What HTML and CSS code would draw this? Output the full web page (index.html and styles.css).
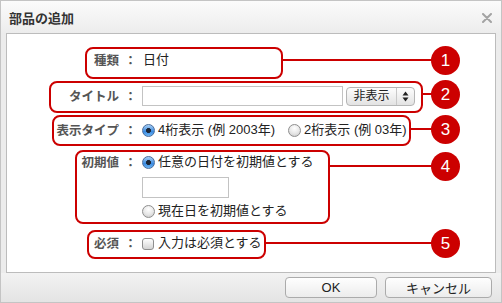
FILE: index.html
```html
<!DOCTYPE html>
<html lang="ja">
<head>
<meta charset="utf-8">
<link rel="stylesheet" href="styles.css">
</head>
<body>
<div class="page">
  <div class="dialog">
    <div class="titlebar">
      <span class="title">部品の追加</span>
      <svg class="close" width="10" height="10" viewBox="0 0 10 10"><path d="M1 1L9 9M9 1L1 9" stroke="#a3a3a3" stroke-width="2" stroke-linecap="round"/></svg>
    </div>
    <div class="panel">
      <div class="row r1">
        <span class="lbl">種類</span><span class="colon">：</span>
        <span class="val">日付</span>
      </div>
      <div class="row r2">
        <span class="lbl">タイトル</span><span class="colon">：</span>
        <span class="text-input wide"></span>
        <span class="select"><span class="sel-text">非表示</span><span class="sel-arrows"><svg width="7" height="11" viewBox="0 0 7 11"><path d="M3.5 0.5L6.5 4.5H0.5Z M3.5 10.5L6.5 6.5H0.5Z" fill="#222"/></svg></span></span>
      </div>
      <div class="row r3">
        <span class="lbl">表示タイプ</span><span class="colon">：</span>
        <span class="radio on"></span><span class="val opt">4桁表示 (例 2003年)</span>
        <span class="radio second"></span><span class="val opt">2桁表示 (例 03年)</span>
      </div>
      <div class="row r4">
        <span class="lbl">初期値</span><span class="colon">：</span>
        <div class="stack">
          <div class="line"><span class="radio on"></span><span class="val opt">任意の日付を初期値とする</span></div>
          <span class="text-input short"></span>
          <div class="line last"><span class="radio"></span><span class="val opt">現在日を初期値とする</span></div>
        </div>
      </div>
      <div class="row r5">
        <span class="lbl">必須</span><span class="colon">：</span>
        <span class="check"></span><span class="val opt">入力は必須とする</span>
      </div>
    </div>
    <div class="footer">
      <span class="btn ok">OK</span>
      <span class="btn cancel">キャンセル</span>
    </div>
  </div>

  <div class="annot">
    <div class="box b1"></div>
    <div class="box b2"></div>
    <div class="box b3"></div>
    <div class="box b4"></div>
    <div class="box b5"></div>
    <div class="lead k1"></div>
    <div class="lead k2"></div>
    <div class="lead k3"></div>
    <div class="lead k4"></div>
    <div class="lead k5"></div>
    <div class="num n1">1</div>
    <div class="num n2">2</div>
    <div class="num n3">3</div>
    <div class="num n4">4</div>
    <div class="num n5">5</div>
  </div>
</div>
</body>
</html>
```
FILE: styles.css
```css
* { box-sizing: border-box; }
html, body { margin: 0; padding: 0; background: #fff; }
body {
  font-family: "Liberation Sans", "Noto Sans CJK JP", sans-serif;
  color: #222;
}
.page { position: relative; width: 502px; height: 303px; overflow: hidden; }

.dialog {
  width: 502px;
  height: 303px;
  border: 1px solid #c4c4c4;
  background: linear-gradient(#fbfbfb 0px, #ececec 33px, #ececec 270px, #e6e6e6 100%);
  display: flex;
  flex-direction: column;
}

.titlebar {
  height: 32px;
  flex: none;
  display: flex;
  align-items: center;
  justify-content: space-between;
  padding: 0 9px 0 8px;
}
.title {
  font-size: 13px;
  font-weight: bold;
  color: #333;
  font-family: "Noto Sans CJK JP", sans-serif;
  margin-top: 1px;
}
.close { margin-top: 1px; }

.panel {
  margin: 0 5px;
  height: 240px;
  flex: none;
  border: 1px solid #bcbcbc;
  background: #fff;
  padding-top: 16px;
  display: flex;
  flex-direction: column;
  overflow: hidden;
}

.row { display: flex; align-items: center; }
.lbl {
  width: 112px;
  flex: none;
  text-align: right;
  font-size: 12.5px;
  font-weight: bold;
  color: #555;
  line-height: 20px;
  font-family: "Noto Sans CJK JP", sans-serif;
}
.colon {
  width: 23px;
  flex: none;
  text-align: center;
  font-size: 12.5px;
  font-weight: bold;
  color: #555;
  line-height: 20px;
  font-family: "Noto Sans CJK JP", sans-serif;
}
.val { font-size: 13px; line-height: 20px; color: #222; white-space: nowrap; }
.r1 .val { margin-left: 1px; }

.r2 { margin-top: 16px; }
.r3 { margin-top: 14px; }
.r4 { margin-top: 12px; align-items: flex-start; }
.r5 { margin-top: 12px; }

.text-input {
  display: block;
  border: 1px solid #c3c3c3;
  background: #fff;
  flex: none;
}
.text-input.wide { width: 201px; height: 20px; }
.text-input.short { width: 87px; height: 21px; margin-top: 5px; }

.select {
  margin-left: 3px;
  width: 69px;
  height: 19px;
  border: 1px solid #b5b5b5;
  border-radius: 4px;
  background: linear-gradient(#fdfdfd, #e3e3e3);
  display: flex;
  align-items: center;
  font-size: 12px;
}
.sel-text {
  width: 50px;
  text-align: center;
  border-right: 1px solid #c8c8c8;
  line-height: 17px;
  color: #222;
}
.sel-arrows { flex: 1; display: flex; justify-content: center; align-items: center; }

.radio {
  width: 13px;
  height: 13px;
  border-radius: 50%;
  border: 1px solid #8e8e8e;
  background: radial-gradient(circle at 50% 30%, #ffffff 0%, #e6e6e6 55%, #c4c4c4 100%);
  margin-right: 3px;
  flex: none;
}
.radio.on {
  border-color: #4a6d9c;
  background: radial-gradient(circle at 50% 50%, #1b2636 0 2.2px, transparent 2.6px),
              linear-gradient(#a9d0f5, #3a8ae0 60%, #6eb6f4);
}
.radio.second { margin-left: 13px; }

.stack { display: flex; flex-direction: column; }
.line { display: flex; align-items: center; }
.line.last { margin-top: 3px; }

.check {
  width: 12px;
  height: 12px;
  flex: none;
  border: 1px solid #8e8e8e;
  border-radius: 3px;
  background: linear-gradient(#ffffff, #d4d4d4);
  margin-right: 4px;
  margin-top: 2px;
}

.footer {
  flex: 1;
  display: flex;
  justify-content: flex-end;
  align-items: flex-start;
  gap: 8px;
  padding: 4px 9px 0 0;
  background: linear-gradient(#f2f2f2, #e4e4e4);
}
.btn {
  height: 21px;
  border: 1px solid #ababab;
  border-radius: 4px;
  background: linear-gradient(#fefefe, #ececec);
  font-size: 13px;
  color: #222;
  display: flex;
  align-items: center;
  justify-content: center;
}
.btn.ok { width: 92px; }
.btn.cancel { width: 107px; }

/* annotation overlay */
.annot { position: absolute; left: 0; top: 0; width: 502px; height: 303px; pointer-events: none; }
.box { position: absolute; border: 2px solid #cc0000; border-radius: 8px; }
.b1 { left: 85px; top: 47px; width: 198px; height: 32px; }
.b2 { left: 49px; top: 81px; width: 374px; height: 32px; }
.b3 { left: 52px; top: 115px; width: 359px; height: 31px; }
.b4 { left: 75px; top: 150px; width: 255px; height: 74px; }
.b5 { left: 87px; top: 230px; width: 179px; height: 29px; }

.lead { position: absolute; height: 2px; background: #cc0000; }
.k1 { left: 283px; top: 59px; width: 150px; }
.k2 { left: 423px; top: 93px; width: 10px; }
.k3 { left: 411px; top: 128px; width: 22px; }
.k4 { left: 330px; top: 165px; width: 103px; }
.k5 { left: 266px; top: 242px; width: 167px; }

.num {
  position: absolute;
  left: 431px;
  width: 29px;
  height: 29px;
  border-radius: 50%;
  background: #cc0000;
  color: #fff;
  font-family: "Liberation Sans", sans-serif;
  font-size: 17px;
  line-height: 29px;
  text-align: center;
}
.n1 { top: 46px; }
.n2 { top: 80px; }
.n3 { top: 115px; }
.n4 { top: 152px; }
.n5 { top: 229px; }
```
